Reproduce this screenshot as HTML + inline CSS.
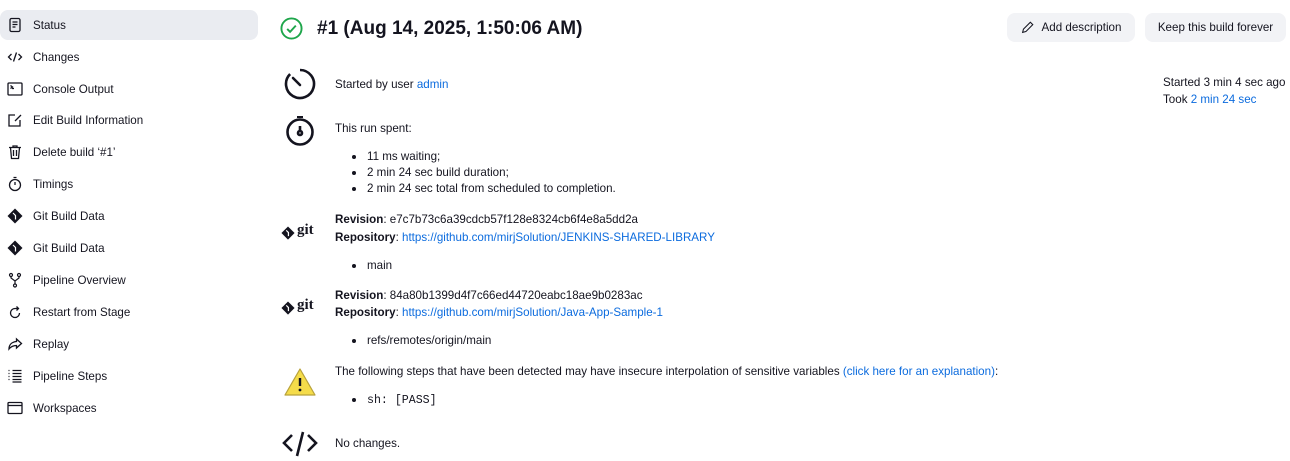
<!DOCTYPE html>
<html><head><meta charset="utf-8"><style>
*{margin:0;padding:0;box-sizing:border-box}
body{width:1290px;height:461px;background:#fff;font-family:"Liberation Sans",Arial,sans-serif;font-size:11.6px;color:#14141f;position:relative;overflow:hidden}
.a{position:absolute;white-space:nowrap}
a{color:#0b6bde;text-decoration:none}
.sb{position:absolute;left:0;width:258px;height:30px;display:flex;align-items:center}
.sb svg{position:absolute;left:7px;width:16px;height:16px}
.sb span{position:absolute;left:33px}
.btn{position:absolute;top:13px;height:29px;background:#f2f3f6;border-radius:8px;display:flex;align-items:center;justify-content:center;font-size:11.6px}
b{font-weight:bold}
.li{position:absolute;left:353px;white-space:nowrap}
.li:before{content:"";position:absolute;left:-1px;top:5px;width:4px;height:4px;border-radius:50%;background:#14141f}
.li span{margin-left:14px}
</style></head><body>
<div style="position:absolute;left:0;top:10px;width:258px;height:30px;background:#eaecf1;border-radius:8px"></div>
<div class="sb" style="top:10px"><svg viewBox="0 0 16 16" fill="none" stroke="#14141f" stroke-width="1.3"><rect x="3" y="1.5" width="10" height="13" rx="1.5"/><path d="M5.5 5h5M5.5 7.5h5M5.5 10h3"/></svg><span>Status</span></div>
<div class="sb" style="top:42px"><svg viewBox="0 0 16 16" fill="none" stroke="#14141f" stroke-width="1.3"><path d="M4.5 5L1.5 8l3 3M11.5 5l3 3-3 3M9.5 3.5l-3 9"/></svg><span>Changes</span></div>
<div class="sb" style="top:74px"><svg viewBox="0 0 16 16" fill="none" stroke="#14141f" stroke-width="1.3"><rect x="1" y="2" width="14" height="12" rx="1"/><path d="M3.5 4.5l2 1.5-2 1.5M5 7.5h2"/></svg><span>Console Output</span></div>
<div class="sb" style="top:105px"><svg viewBox="0 0 16 16" fill="none" stroke="#14141f" stroke-width="1.3"><path d="M8 3H2v11h11V8M8 9l6-6"/></svg><span>Edit Build Information</span></div>
<div class="sb" style="top:137px"><svg viewBox="0 0 16 16" fill="none" stroke="#14141f" stroke-width="1.3"><path d="M2 3.5h12M6 3.5V2h4v1.5M3.5 3.5l1 11h7l1-11M6.5 6v6M9.5 6v6"/></svg><span>Delete build ‘#1’</span></div>
<div class="sb" style="top:169px"><svg viewBox="0 0 16 16" fill="none" stroke="#14141f" stroke-width="1.3"><circle cx="8" cy="9" r="5.5"/><path d="M8 9V6M6.5 1.5h3"/></svg><span>Timings</span></div>
<div class="sb" style="top:201px"><svg viewBox="0 0 16 16"><path d="M8 0.5L15.5 8 8 15.5 0.5 8z" fill="#14141f"/><path d="M6 5l2.5 2.5v4" stroke="#fff" stroke-width="1.2" fill="none"/></svg><span>Git Build Data</span></div>
<div class="sb" style="top:233px"><svg viewBox="0 0 16 16"><path d="M8 0.5L15.5 8 8 15.5 0.5 8z" fill="#14141f"/><path d="M6 5l2.5 2.5v4" stroke="#fff" stroke-width="1.2" fill="none"/></svg><span>Git Build Data</span></div>
<div class="sb" style="top:265px"><svg viewBox="0 0 16 16" fill="none" stroke="#14141f" stroke-width="1.2"><circle cx="4" cy="3" r="1.5"/><circle cx="12" cy="3" r="1.5"/><circle cx="8" cy="13.5" r="1.5"/><path d="M4 4.5v1.5l4 3 4-3V4.5M8 9v3"/></svg><span>Pipeline Overview</span></div>
<div class="sb" style="top:297px"><svg viewBox="0 0 16 16" fill="none" stroke="#14141f" stroke-width="1.3"><path d="M12.5 9a4.5 4.5 0 1 1-4.5-4.5h3M9.5 2.5l2 2-2 2"/></svg><span>Restart from Stage</span></div>
<div class="sb" style="top:329px"><svg viewBox="0 0 16 16" fill="none" stroke="#14141f" stroke-width="1.3"><path d="M9.5 3l5 4.5-5 4.5V9.5c-3 0-5.5 1-7.5 3.5 0-4 2.5-7 7.5-7.5z"/></svg><span>Replay</span></div>
<div class="sb" style="top:361px"><svg viewBox="0 0 16 16" fill="none" stroke="#14141f" stroke-width="1.3"><path d="M5.5 2.5h9M5.5 5.5h9M5.5 8.5h9M5.5 11.5h9M5.5 14h9M1.5 2.5h1M1.5 5.5h1M1.5 8.5h1M1.5 11.5h1"/></svg><span>Pipeline Steps</span></div>
<div class="sb" style="top:393px"><svg viewBox="0 0 16 16" fill="none" stroke="#14141f" stroke-width="1.3"><rect x="1" y="2.5" width="14" height="11" rx="1"/><path d="M1 5.5h14"/></svg><span>Workspaces</span></div>

<svg class="a" style="left:280px;top:17px" width="23" height="23" viewBox="0 0 24 24" fill="none" stroke="#1ea64b" stroke-width="2"><circle cx="12" cy="12" r="10.5"/><path d="M7.5 12.5l3 3 6-6.5"/></svg>
<div class="a" style="left:317px;top:17px;font-size:19px;font-weight:bold;line-height:24px">#1 (Aug 14, 2025, 1:50:06 AM)</div>

<div class="btn" style="left:1007px;width:128px"><svg width="13" height="13" viewBox="0 0 16 16" fill="none" stroke="#14141f" stroke-width="1.3" style="margin-right:8px"><path d="M2 14l1-4 8.5-8.5 3 3L6 13z"/></svg>Add description</div>
<div class="btn" style="left:1145px;width:141px">Keep this build forever</div>

<div class="a" style="left:1163px;top:74px;line-height:17px">Started 3 min 4 sec ago<br>Took <a>2 min 24 sec</a></div>

<svg class="a" style="left:283px;top:67px" width="34" height="34" viewBox="0 0 34 34" fill="none" stroke="#14141f" stroke-width="2.6"><path d="M17 3a14 14 0 1 1-9.9 4.1"/><path d="M10 11l7 7" stroke-linecap="round"/></svg>
<div class="a" style="left:335px;top:78px">Started by user <a>admin</a></div>

<svg class="a" style="left:284px;top:113px" width="32" height="34" viewBox="0 0 32 34" fill="none" stroke="#14141f" stroke-width="2.6"><circle cx="16" cy="19" r="12.5"/><path d="M16 13v5"/><circle cx="16" cy="20" r="2"/><path d="M13 4h6" stroke-width="2"/></svg>
<div class="a" style="left:335px;top:122px">This run spent:</div>
<div class="li" style="top:150px"><span>11 ms waiting;</span></div>
<div class="li" style="top:166px"><span>2 min 24 sec build duration;</span></div>
<div class="li" style="top:182px"><span>2 min 24 sec total from scheduled to completion.</span></div>

<svg class="a" style="left:281px;top:226px" width="14" height="14" viewBox="0 0 16 16"><path d="M8 0.5L15.5 8 8 15.5 0.5 8z" fill="#14141f"/><path d="M6 5l2.5 2.5v4" stroke="#fff" stroke-width="1.4" fill="none"/></svg>
<div class="a" style="left:297px;top:222px;font-size:15px;font-weight:bold;font-family:'Liberation Serif',serif">git</div>
<div class="a" style="left:335px;top:213px"><b>Revision</b>: e7c7b73c6a39cdcb57f128e8324cb6f4e8a5dd2a</div>
<div class="a" style="left:335px;top:231px"><b>Repository</b>: <a>https://github.com/mirjSolution/JENKINS-SHARED-LIBRARY</a></div>
<div class="li" style="top:259px"><span>main</span></div>

<svg class="a" style="left:281px;top:301px" width="14" height="14" viewBox="0 0 16 16"><path d="M8 0.5L15.5 8 8 15.5 0.5 8z" fill="#14141f"/><path d="M6 5l2.5 2.5v4" stroke="#fff" stroke-width="1.4" fill="none"/></svg>
<div class="a" style="left:297px;top:297px;font-size:15px;font-weight:bold;font-family:'Liberation Serif',serif">git</div>
<div class="a" style="left:335px;top:289px"><b>Revision</b>: 84a80b1399d4f7c66ed44720eabc18ae9b0283ac</div>
<div class="a" style="left:335px;top:306px"><b>Repository</b>: <a>https://github.com/mirjSolution/Java-App-Sample-1</a></div>
<div class="li" style="top:334px"><span>refs/remotes/origin/main</span></div>

<svg class="a" style="left:283px;top:367px" width="34" height="31" viewBox="0 0 34 31"><path d="M17 2L32 28H2z" fill="#f5dc4a" stroke="#b8a23a" stroke-width="1.2" stroke-linejoin="round"/><path d="M17 11v8" stroke="#14141f" stroke-width="2.4"/><circle cx="17" cy="23" r="1.4" fill="#14141f"/></svg>
<div class="a" style="left:335px;top:365px">The following steps that have been detected may have insecure interpolation of sensitive variables <a>(click here for an explanation)</a>:</div>
<div class="li" style="top:393px"><span style="font-family:'Liberation Mono',monospace">sh: [PASS]</span></div>

<svg class="a" style="left:282px;top:430px" width="36" height="28" viewBox="0 0 36 28" fill="none" stroke="#14141f" stroke-width="2.6"><path d="M10 5L2 13l8 8M26 5l8 8-8 8M21 2l-6 24"/></svg>
<div class="a" style="left:335px;top:437px">No changes.</div>
</body></html>
